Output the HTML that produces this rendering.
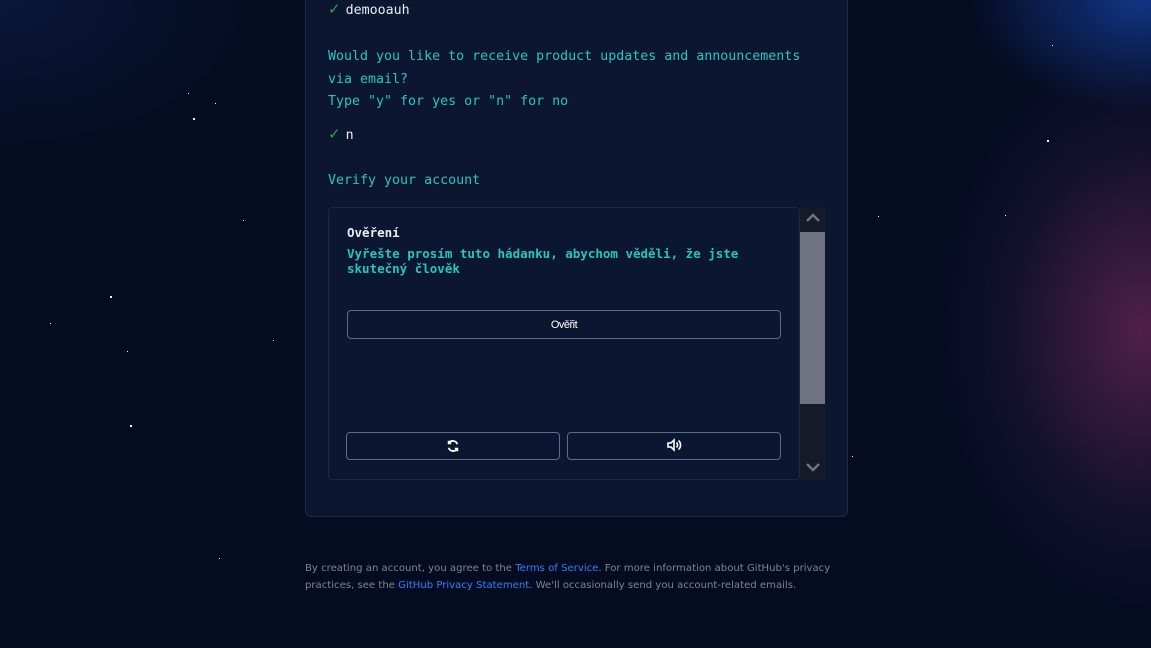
<!DOCTYPE html>
<html><head><meta charset="utf-8"><style>
*{margin:0;padding:0;box-sizing:border-box}
body{width:1151px;height:648px;overflow:hidden;position:relative;
background:radial-gradient(ellipse 200px 280px at 1140px 330px,rgba(110,40,90,.7),rgba(60,30,80,.25) 65%,transparent 100%),
radial-gradient(ellipse 170px 110px at 1140px 0px,rgba(20,60,150,.85),transparent 100%),
radial-gradient(ellipse 250px 150px at 0px 0px,rgba(20,45,100,.35),transparent 100%),
#050c22;font-family:"Liberation Sans",sans-serif}
.mono{font-family:"DejaVu Sans Mono","Liberation Mono",monospace;font-size:13.3px}
.card{position:absolute;left:305px;top:-10px;width:543px;height:527px;background:#0c1630;border:1px solid #1f2a40;border-radius:6px}
.t{position:absolute;left:328px;color:#26c6c0}
.w{color:#e6edf3}
.ck{color:#2ea043;margin-right:5px;font-size:15px;font-family:"DejaVu Sans",sans-serif}
.cap{position:absolute;left:328px;top:207px;width:472px;height:273px;border:1px solid #1e2840;border-radius:4px;background:#0b1630}
.btn{position:absolute;border:1px solid #5d6c8a;border-radius:4px;background:#0b1630;color:#fff}
.sb{position:absolute;left:800px;top:207px;width:26px;height:273px;background:#141a28}
.thumb{position:absolute;left:0;top:25px;width:25px;height:172px;background:#6e7281}
.foot{position:absolute;left:305px;top:560px;width:540px;font-family:"DejaVu Sans",sans-serif;font-size:10.1px;line-height:17px;color:#7b8496}
.foot a{color:#2f81f7;text-decoration:none}
.s{position:absolute;width:2px;height:2px;background:#fff}
</style></head><body>
<div class="s" style="left:193px;top:118px"></div><div class="s" style="left:110px;top:296px"></div>
<div class="s" style="left:130px;top:425px"></div><div class="s" style="left:1047px;top:140px"></div>
<div class="s" style="left:1005px;top:215px;width:1px;height:1px"></div><div class="s" style="left:273px;top:340px;width:1px;height:1px"></div>
<div class="s" style="left:188px;top:93px;width:1px;height:1px"></div><div class="s" style="left:1052px;top:45px;width:1px;height:1px"></div>
<div class="s" style="left:878px;top:216px;width:1px;height:1px"></div><div class="s" style="left:415px;top:516px;width:1px;height:1px"></div>
<div class="s" style="left:50px;top:323px;width:1px;height:1px"></div><div class="s" style="left:127px;top:351px;width:1px;height:1px"></div>
<div class="s" style="left:215px;top:103px;width:1px;height:1px"></div><div class="s" style="left:243px;top:220px;width:1px;height:1px"></div>
<div class="s" style="left:852px;top:456px;width:1px;height:1px"></div><div class="s" style="left:219px;top:558px;width:1px;height:1px"></div>
<div class="card"></div>
<div class="t mono w" style="top:0px;line-height:19px"><span class="ck">✓</span>demooauh</div>
<div class="t mono" style="top:46px;line-height:22.5px;width:480px">Would you like to receive product updates and announcements via email?<br>Type "y" for yes or "n" for no</div>
<div class="t mono w" style="top:124px;line-height:20px"><span class="ck">✓</span>n</div>
<div class="t mono" style="top:171px;line-height:20px">Verify your account</div>
<div class="cap"></div>
<div class="mono w" style="position:absolute;left:347px;top:225px;font-size:12.5px;font-weight:bold">Ověření</div>
<div class="mono" style="position:absolute;left:347px;top:246px;font-size:12.5px;font-weight:bold;color:#26c6c0;line-height:15px;width:420px">Vyřešte prosím tuto hádanku, abychom věděli, že jste skutečný člověk</div>
<div class="btn" style="left:347px;top:310px;width:434px;height:29px;font-size:11px;text-align:center;line-height:29px;letter-spacing:-.5px">Ověřit</div>
<div class="btn" style="left:346px;top:432px;width:214px;height:28px">
<svg style="position:absolute;left:99px;top:6px" width="14" height="14" viewBox="0 0 16 16" fill="none" stroke="#fff" stroke-width="2"><path d="M13 6A5.5 5.5 0 0 0 3 5M3 10a5.5 5.5 0 0 0 10 1"/><path d="M3 2v3h3M13 14v-3h-3"/></svg></div>
<div class="btn" style="left:567px;top:432px;width:214px;height:28px">
<svg style="position:absolute;left:98px;top:4px" width="16" height="16" viewBox="0 0 16 16" fill="none" stroke="#fff" stroke-width="1.6"><path d="M2 6h3l3-3v10l-3-3H2z"/><path d="M10.5 5.5a3.5 3.5 0 0 1 0 5M12.5 3.5a6 6 0 0 1 0 9"/></svg></div>
<div class="sb"><div class="thumb"></div>
<svg style="position:absolute;left:6px;top:6px" width="14" height="10" viewBox="0 0 14 10" fill="none" stroke="#6e7281" stroke-width="2.5"><path d="M1 8l6-6 6 6"/></svg>
<svg style="position:absolute;left:6px;top:255px" width="14" height="10" viewBox="0 0 14 10" fill="none" stroke="#6e7281" stroke-width="2.5"><path d="M1 2l6 6 6-6"/></svg></div>
<div class="foot">By creating an account, you agree to the <a>Terms of Service</a>. For more information about GitHub's privacy practices, see the <a>GitHub Privacy Statement</a>. We'll occasionally send you account-related emails.</div>
</body></html>
